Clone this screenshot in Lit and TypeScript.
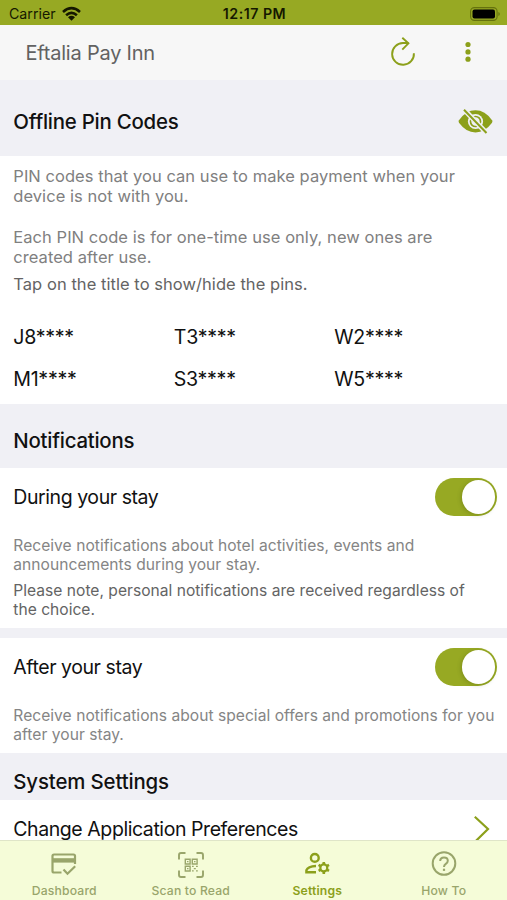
import { LitElement, html, css } from "lit";
import { customElement, property } from "lit/decorators.js";

@customElement("toggle-switch")
export class ToggleSwitch extends LitElement {
  static styles = css`
    :host { display: block; flex: none; }
    .track {
      box-sizing: border-box; width: 62px; height: 38px; padding: 2px;
      border-radius: 19px; background: #97a923;
      display: flex; justify-content: flex-end; align-items: center;
    }
    .knob {
      width: 33.5px; height: 33.5px; border-radius: 50%; background: #fff;
      box-shadow: -1px 1px 4px rgba(60, 70, 0, 0.25);
    }
  `;
  render() {
    return html`<div class="track"><div class="knob"></div></div>`;
  }
}

@customElement("tab-item")
export class TabItem extends LitElement {
  @property() label = "";
  @property({ type: Boolean, reflect: true }) active = false;
  static styles = css`
    :host { display: flex; flex-direction: column; align-items: center; flex: 1; color: #99a56b; }
    :host([active]) { color: #8ca01b; }
    .icon { height: 28px; margin-top: 10px; display: flex; }
    .label { margin-top: 4px; font-size: 12.2px; line-height: 16px; font-weight: 500; letter-spacing: 0.15px; white-space: nowrap; }
    :host([active]) .label { font-weight: 600; letter-spacing: 0.15px; }
  `;
  render() {
    return html`<div class="icon"><slot></slot></div><div class="label">${this.label}</div>`;
  }
}

@customElement("app-root")
export class AppRoot extends LitElement {
  pins = ["J8****", "T3****", "W2****", "M1****", "S3****", "W5****"];

  static styles = css`
    :host {
      display: flex; flex-direction: column; height: 900px; overflow: hidden;
      background: #fff; color: #111;
      font-family: Inter, "Liberation Sans", sans-serif;
    }
    svg { display: block; overflow: visible; fill: none; stroke: currentColor; }
    .solid { fill: currentColor; stroke: none; }
    .status {
      flex: none; height: 25px; background: #97a923; color: #151800;
      display: grid; grid-template-columns: 1fr auto 1fr; align-items: center;
      padding: 2px 7px 0 9px; box-sizing: border-box; font-size: 14.2px;
    }
    .carrier { display: flex; align-items: center; gap: 6px; }
    .clock { font-weight: 600; letter-spacing: 0.5px; }
    .battery { justify-self: end; }
    .bar {
      flex: none; height: 55px; box-sizing: border-box; background: #f7f7f7; color: #8ca01b;
      display: flex; align-items: center; padding: 0 36px 0 25.5px;
    }
    .title { flex: 1; color: #626262; font-size: 20px; letter-spacing: -0.22px; }
    .refresh { margin-bottom: 3px; }
    .dots { margin: 0 0 2px 50px; }
    .content { flex: 1; min-height: 0; overflow: hidden; }
    .section {
      box-sizing: border-box; background: #f0f0f5; padding: 0 14.5px 0 13.3px;
      display: flex; align-items: center; justify-content: space-between;
      font-size: 20.4px; font-weight: 500; letter-spacing: -0.23px;
    }
    .s1 { height: 76px; padding-top: 6px; }
    .s2 { height: 64px; padding-top: 8px; }
    .s3 { height: 47px; padding-top: 10px; letter-spacing: -0.13px; }
    .eye { color: #8ca01b; }
    .pinbox { height: 248px; box-sizing: border-box; padding: 9.5px 13.3px 0; }
    .p { margin: 0; color: #808080; font-size: 16.5px; line-height: 20.4px; letter-spacing: 0.05px; white-space: pre-line; }
    .p.dark { color: #646464; margin-top: 6.6px; }
    .pins {
      margin-top: 21.9px; display: grid; grid-template-columns: 160.5px 160.5px auto;
      grid-auto-rows: 42px; align-items: center; font-size: 19.6px; letter-spacing: -0.3px;
    }
    .choice { box-sizing: border-box; padding: 10px 10px 0 13.3px; }
    .c1 { height: 160px; }
    .c2 { height: 115px; }
    .divider { height: 10px; background: #f0f0f5; }
    .row { display: flex; align-items: center; justify-content: space-between; font-size: 19.5px; letter-spacing: -0.43px; }
    .n { margin: 19.5px 0 0; color: #858585; font-size: 15.6px; line-height: 19px; letter-spacing: 0.03px; white-space: pre-line; }
    .n.dark { color: #646464; margin-top: 7px; letter-spacing: 0.01px; }
    .link { padding: 2px 18px 0 13.3px; height: 53px; }
    .arrow { color: #8ca01b; }
    .tabs {
      flex: none; height: 60px; box-sizing: border-box; border-top: 1px solid #dfe5c8;
      background: #f5fcd8; display: flex; padding-left: 1px;
    }
  `;

  render() {
    return html`
      <div class="status">
        <div class="carrier">
          <span>Carrier</span>
          <svg width="19" height="14" viewBox="0 0 19 14" stroke-width="2.6">
            <path d="M1 5Q9.500 -2.600 18 5M4.100 8.200Q9.500 3.400 14.900 8.200" />
            <path class="solid" d="M6 10.200Q9.500 7.300 13 10.200L9.500 13.700Z" />
          </svg>
        </div>
        <div class="clock">12:17 PM</div>
        <svg class="battery" width="30" height="14" viewBox="0 0 30 14">
          <rect x="0.600" y="0.600" width="26.500" height="12.800" rx="3.800" stroke="#65720e" stroke-width="1.100" />
          <rect x="2.500" y="2.500" width="22.500" height="9" rx="2" fill="#000" stroke="none" />
          <path d="M28.400 5v4q1.400-.6 1.400-2t-1.400-2Z" fill="#65720e" stroke="none" />
        </svg>
      </div>

      <div class="bar">
        <div class="title">Eftalia Pay Inn</div>
        <svg class="refresh" width="24" height="29" viewBox="0 0 24 29" stroke-width="1.900">
          <path d="M22.900 16.200A10.900 10.900 0 1 1 12 6H17.500" />
          <path d="M11.300 .8L17.400 6.300L11.300 12.600" />
        </svg>
        <svg class="dots" width="6" height="20" viewBox="0 0 6 20">
          <g class="solid"><circle cx="3" cy="2.500" r="2.600" /><circle cx="3" cy="9.900" r="2.600" /><circle cx="3" cy="17.200" r="2.600" /></g>
        </svg>
      </div>

      <div class="content">
        <div class="section s1">
          <span>Offline Pin Codes</span>
          <svg class="eye" width="35" height="25" viewBox="0 0 35 25">
            <path class="solid" d="M1 11.200Q8 1.300 17.500 1.300T34 11.200Q34.900 12.500 34 13.800Q27 23.500 17.500 23.500T1 13.800Q.1 12.500 1 11.200Z" />
            <circle cx="17.500" cy="12.500" r="7.600" fill="#f0f0f5" stroke="none" />
            <circle cx="17.500" cy="12.500" r="5" stroke-width="1.700" />
            <path d="M14.800 12.800q.1-2.600 2.700-2.800" stroke-width="1.100" />
            <path d="M6.500 1L28.500 24" stroke="#f0f0f5" stroke-width="5" />
            <path d="M6 .8L28.500 24" stroke-width="2" />
          </svg>
        </div>
        <div class="pinbox">
          <p class="p">PIN codes that you can use to make payment when your
device is not with you.

Each PIN code is for one-time use only, new ones are
created after use.</p>
          <p class="p dark">Tap on the title to show/hide the pins.</p>
          <div class="pins">${this.pins.map((p) => html`<span>${p}</span>`)}</div>
        </div>

        <div class="section s2"><span>Notifications</span></div>
        <div class="choice c1">
          <div class="row"><span>During your stay</span><toggle-switch></toggle-switch></div>
          <p class="n">Receive notifications about hotel activities, events and
announcements during your stay.</p>
          <p class="n dark">Please note, personal notifications are received regardless of
the choice.</p>
        </div>
        <div class="divider"></div>
        <div class="choice c2">
          <div class="row"><span>After your stay</span><toggle-switch></toggle-switch></div>
          <p class="n">Receive notifications about special offers and promotions for you
after your stay.</p>
        </div>

        <div class="section s3"><span>System Settings</span></div>
        <div class="row link">
          <span>Change Application Preferences</span>
          <svg class="arrow" width="15" height="26" viewBox="0 0 15 26" stroke-width="2.200"><path d="M.8 .8L14 13L.8 26" /></svg>
        </div>
      </div>

      <div class="tabs">
        <tab-item label="Dashboard">
          <svg width="26" height="28" viewBox="0 0 26 28" stroke-width="2.2" stroke="currentColor" fill="none">
            <path d="M10.500 21.500H3Q1.500 21.500 1.500 20V5Q1.500 3.500 3 3.500H22.500Q24 3.500 24 5V13" />
            <path d="M1.500 9.400H24" stroke-width="4.400" />
            <path d="M12.500 18.500L16.500 22.800L24.200 15.300" />
          </svg>
        </tab-item>
        <tab-item label="Scan to Read">
          <svg width="26" height="28" viewBox="0 0 26 28" stroke="currentColor" fill="none">
            <path stroke-width="1.900" d="M1 8.500V4Q1 2 3 2H7.500M18.500 2H23Q25 2 25 4V8.500M25 19.500V24Q25 26 23 26H18.500M7.500 26H3Q1 26 1 24V19.500" />
            <path stroke-width="1.400" d="M7.300 8.200h4.800v4.800H7.300ZM14.300 8.200h4.800v4.800H14.300ZM7.300 15.200h4.800v4.800H7.300Z" />
            <path stroke-width="1.400" d="M9 10.600h1.500M16 10.600h1.500M9 17.600h1.500M14 15.400h1.700M18 15.400h1.800M15.800 17.600h2M14 19.900h1.700M18 19.900h1.800" />
          </svg>
        </tab-item>
        <tab-item label="Settings" active>
          <svg width="25" height="28" viewBox="0 0 25 28" stroke="currentColor" fill="none" stroke-width="2.400">
            <circle cx="9.800" cy="6.900" r="3.900" />
            <path d="M11 21.300H1.400V19.300Q3 15.300 11 15" />
            <circle cx="18.800" cy="16.900" r="3.500" stroke-width="2.200" />
            <path stroke-width="2.600" d="M18.800 13.400V10.900M18.800 20.400V22.900M15.800 15.150L13.600 13.900M21.800 18.650L24 19.900M15.800 18.650L13.600 19.900M21.800 15.150L24 13.900" />
          </svg>
        </tab-item>
        <tab-item label="How To">
          <svg width="26" height="28" viewBox="0 0 26 28" stroke="currentColor" fill="none" stroke-width="2">
            <circle cx="13" cy="12.500" r="11.300" />
            <path d="M9.200 10Q9.200 6.400 13 6.400T16.800 9.700Q16.800 11.500 14.800 12.900Q13 14.200 13 16.100" />
            <path d="M13 17.700V19.900" stroke-width="2.200" />
          </svg>
        </tab-item>
      </div>
    `;
  }
}
